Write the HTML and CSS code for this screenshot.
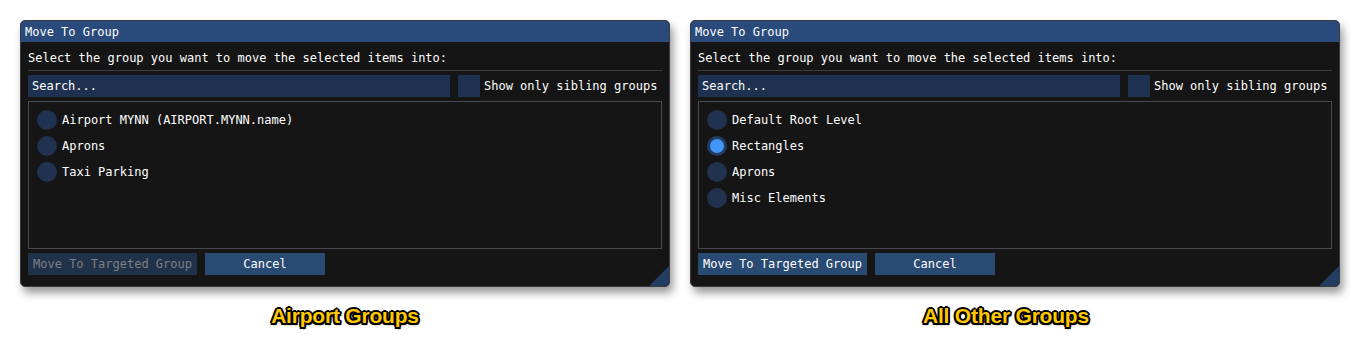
FILE: index.html
```html
<!DOCTYPE html>
<html>
<head>
<meta charset="utf-8">
<link rel="stylesheet" href="styles.css">
</head>
<body>
<div class="page">
  <div class="panel">
    <div class="window">
      <div class="titlebar">Move To Group</div>
      <div class="content">
        <div class="prompt">Select the group you want to move the selected items into:</div>
        <div class="separator"></div>
        <div class="searchrow">
          <div class="search">Search...</div>
          <div class="checkbox"></div>
          <div class="cblabel">Show only sibling groups</div>
        </div>
        <div class="listbox">
          <div class="item"><span class="radio"></span><span>Airport MYNN (AIRPORT.MYNN.name)</span></div>
          <div class="item"><span class="radio"></span><span>Aprons</span></div>
          <div class="item"><span class="radio"></span><span>Taxi Parking</span></div>
        </div>
        <div class="buttons">
          <div class="btn btn-wide disabled">Move To Targeted Group</div>
          <div class="btn btn-cancel">Cancel</div>
        </div>
      </div>
      <div class="grip"></div>
    </div>
    <div class="caption">Airport Groups</div>
  </div>
  <div class="panel">
    <div class="window">
      <div class="titlebar">Move To Group</div>
      <div class="content">
        <div class="prompt">Select the group you want to move the selected items into:</div>
        <div class="separator"></div>
        <div class="searchrow">
          <div class="search">Search...</div>
          <div class="checkbox"></div>
          <div class="cblabel">Show only sibling groups</div>
        </div>
        <div class="listbox">
          <div class="item"><span class="radio"></span><span>Default Root Level</span></div>
          <div class="item"><span class="radio selected"></span><span>Rectangles</span></div>
          <div class="item"><span class="radio"></span><span>Aprons</span></div>
          <div class="item"><span class="radio"></span><span>Misc Elements</span></div>
        </div>
        <div class="buttons">
          <div class="btn btn-wide">Move To Targeted Group</div>
          <div class="btn btn-cancel">Cancel</div>
        </div>
      </div>
      <div class="grip"></div>
    </div>
    <div class="caption caption-shifted">All Other Groups</div>
  </div>
</div>
</body>
</html>
```

FILE: styles.css
```css
html, body {
  margin: 0;
  padding: 0;
  background: #ffffff;
}
body {
  width: 1360px;
  height: 338px;
  overflow: hidden;
}
.page {
  display: flex;
  gap: 20px;
  padding: 20px 0 0 20px;
}
.panel {
  display: flex;
  flex-direction: column;
  align-items: center;
  width: 650px;
}
.window {
  position: relative;
  width: 650px;
  height: 267px;
  box-sizing: border-box;
  background: #151515;
  border: 1px solid #3b3b40;
  border-radius: 5px;
  box-shadow: 3px 6px 9px rgba(0, 0, 0, 0.4);
  overflow: hidden;
  font-family: "DejaVu Sans Mono", "Liberation Mono", monospace;
  font-size: 12px;
  color: #ffffff;
  display: flex;
  flex-direction: column;
}
.titlebar {
  height: 21px;
  line-height: 23px;
  background: #294a7a;
  padding-left: 4px;
  flex-shrink: 0;
  overflow: hidden;
}
.content {
  display: flex;
  flex-direction: column;
  padding: 9px 7px 0 7px;
}
.prompt {
  height: 15px;
  line-height: 15px;
}
.separator {
  height: 1px;
  background: #3d3d44;
  margin-top: 4px;
}
.searchrow {
  display: flex;
  align-items: center;
  margin-top: 4px;
  height: 22px;
}
.search {
  width: 418px;
  height: 22px;
  line-height: 22px;
  background: #1e3150;
  padding-left: 4px;
}
.checkbox {
  width: 22px;
  height: 22px;
  background: #1e3150;
  margin-left: 8px;
}
.cblabel {
  margin-left: 4px;
}
.listbox {
  margin-top: 4px;
  height: 148px;
  box-sizing: border-box;
  border: 1px solid #48484e;
  padding: 7px 8px;
  display: flex;
  flex-direction: column;
  gap: 4px;
}
.item {
  display: flex;
  align-items: center;
  height: 22px;
  gap: 5px;
}
.radio {
  width: 20px;
  height: 20px;
  border-radius: 50%;
  background: #20324f;
  display: flex;
  align-items: center;
  justify-content: center;
  flex-shrink: 0;
}
.radio.selected {
  background: #233c62;
}
.radio.selected::after {
  content: "";
  width: 14px;
  height: 14px;
  border-radius: 50%;
  background: #4296fa;
}
.buttons {
  display: flex;
  gap: 8px;
  margin-top: 4px;
}
.btn {
  height: 22px;
  line-height: 22px;
  text-align: center;
  background: #294a73;
}
.btn-wide {
  width: 169px;
}
.btn-cancel {
  width: 120px;
}
.btn.disabled {
  background: #1f3249;
  color: #7f7f84;
}
.grip {
  position: absolute;
  right: 0;
  bottom: 0;
  width: 0;
  height: 0;
  border-style: solid;
  border-width: 0 0 20px 20px;
  border-color: transparent transparent #233d62 transparent;
}
.caption {
  margin-top: 17px;
  font-family: "Liberation Sans", Arial, sans-serif;
  font-weight: bold;
  font-size: 21px;
  line-height: 24px;
  color: #ffc800;
  letter-spacing: -0.2px;
  text-shadow:
    -1.5px -1.5px 0 #000, 1.5px -1.5px 0 #000,
    -1.5px 1.5px 0 #000, 1.5px 1.5px 0 #000,
    0 -2px 0 #000, 0 2px 0 #000,
    -2px 0 0 #000, 2px 0 0 #000,
    1px 2px 2px rgba(0,0,0,0.6);
}
.caption-shifted {
  margin-right: 18px;
}
```
